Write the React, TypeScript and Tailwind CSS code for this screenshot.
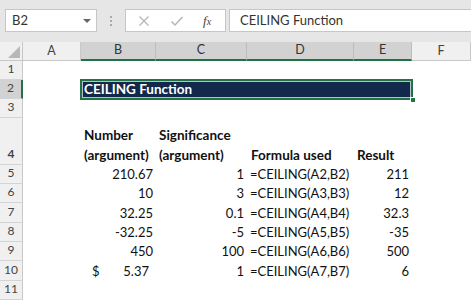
import React from 'react'

const cols = [58, 75, 91, 107, 58, 59]
const letters = ['A', 'B', 'C', 'D', 'E', 'F']

const num = 'flex items-end justify-end pr-[3px] pb-0'
const txt = 'flex items-end pl-[3px] pb-0'

const data: [string, string, string, string][] = [
    ['210.67', '1', '=CEILING(A2,B2)', '211'],
    ['10', '3', '=CEILING(A3,B3)', '12'],
    ['32.25', '0.1', '=CEILING(A4,B4)', '32.3'],
    ['-32.25', '-5', '=CEILING(A5,B5)', '-35'],
    ['450', '100', '=CEILING(A6,B6)', '500'],
    ['5.37', '1', '=CEILING(A7,B7)', '6'],
]
const heights = [19, 19, 20, 19, 19, 20]

const RowHead = ({ n, h, active }: { n: number; h: number; active?: boolean }) => (
    <div
        style={{ height: h }}
        className={`w-[23px] shrink-0 flex items-end justify-center pb-[1px] border-b border-[#d4d4d4] text-[12px] text-[#444] ${active ? 'bg-[#d2d2d2] border-r-2 border-r-[#217346]' : 'bg-[#f0f0f0] border-r border-r-[#c8c8c8]'}`}
    >
        {n}
    </div>
)

const App = () => {
    return (
        <div className="w-[471px] h-[300px] overflow-hidden bg-white font-['Lato','Liberation_Sans',sans-serif] text-[13px] text-[#111]">
            {/* formula bar */}
            <div className="h-[42px] bg-[#e6e6e6] flex items-start pt-[9px]">
                <div className="ml-[5px] w-[92px] h-[23px] bg-white border border-[#c6c6c6] flex items-center justify-between pl-[6px] pr-[5px]">
                    <span className="text-[13px] text-[#333]">B2</span>
                    <span className="w-0 h-0 border-l-[4px] border-r-[4px] border-t-[4px] border-l-transparent border-r-transparent border-t-[#666]" />
                </div>
                <div className="w-[28px] h-[23px] flex flex-col items-center justify-center gap-[2px]">
                    <span className="w-[2px] h-[2px] bg-[#aaa]" />
                    <span className="w-[2px] h-[2px] bg-[#aaa]" />
                    <span className="w-[2px] h-[2px] bg-[#aaa]" />
                </div>
                <div className="w-[101px] h-[23px] bg-white border border-[#c6c6c6] flex items-center">
                    <svg width="12" height="12" viewBox="0 0 12 12" className="ml-[12px]">
                        <path d="M1.5 1.5 L10.5 10.5 M10.5 1.5 L1.5 10.5" stroke="#b5b5b5" strokeWidth="1.3" fill="none" />
                    </svg>
                    <svg width="14" height="12" viewBox="0 0 14 12" className="ml-[20px]">
                        <path d="M1.5 6.5 L5 10 L12.5 2" stroke="#b5b5b5" strokeWidth="1.5" fill="none" />
                    </svg>
                    <span className="ml-[19px] font-['Liberation_Serif',serif] italic text-[13px] text-[#444]">f<span className="text-[10px]">x</span></span>
                </div>
                <div className="ml-[3px] flex-1 h-[23px] bg-white border border-[#c6c6c6] border-r-0 flex items-center pl-[10px] text-[13px] text-[#333]">
                    CEILING Function
                </div>
            </div>

            {/* column headers */}
            <div className="flex h-[19px]">
                <div className="w-[23px] shrink-0 bg-[#f0f0f0] border-r border-b border-[#c8c8c8] relative">
                    <svg width="12" height="12" className="absolute right-[2px] bottom-[2px]"><path d="M12 0 L12 12 L0 12 Z" fill="#b8b8b8" /></svg>
                </div>
                {letters.map((l, i) => {
                    const sel = i >= 1 && i <= 4
                    return (
                        <div
                            key={l}
                            style={{ width: cols[i] }}
                            className={`shrink-0 flex items-center justify-center text-[12.5px] border-r ${sel ? 'bg-[#d2d2d2] text-[#333] border-r-[#bdbdbd] border-b-2 border-b-[#217346]' : 'bg-[#f0f0f0] text-[#444] border-r-[#c8c8c8] border-b border-b-[#c8c8c8]'}`}
                        >
                            {l}
                        </div>
                    )
                })}
            </div>

            {/* row 1 */}
            <div className="flex">
                <RowHead n={1} h={19} />
            </div>

            {/* row 2 title */}
            <div className="flex">
                <RowHead n={2} h={19} active />
                <div className="w-[58px] shrink-0" />
                <div className="w-[331px] h-[19px] shrink-0 relative bg-[#13294b] flex items-center pl-[3px]">
                    <span className="font-bold text-white text-[13.5px]">CEILING Function</span>
                    <div className="absolute inset-x-[-1px] inset-y-[-1px] border-2 border-[#217346]">
                        <div className="w-full h-full border border-white/70" />
                    </div>
                    <div className="absolute right-[-4px] bottom-[-4px] w-[6px] h-[6px] bg-[#217346] border border-white" />
                </div>
            </div>

            {/* row 3 */}
            <div className="flex">
                <RowHead n={3} h={19} />
            </div>

            {/* row 4 headers */}
            <div className="flex h-[47px] font-bold text-[13.5px]">
                <RowHead n={4} h={47} />
                <div className="w-[58px] shrink-0" />
                <div className={`w-[75px] shrink-0 ${txt} leading-[20px]`}>
                    <div>Number<br />(argument)</div>
                </div>
                <div className={`w-[91px] shrink-0 ${txt} leading-[20px]`}>
                    <div>Significance<br />(argument)</div>
                </div>
                <div className={`w-[107px] shrink-0 ${txt} pl-[4px] leading-[20px]`}>Formula used</div>
                <div className={`w-[58px] shrink-0 ${txt} leading-[20px]`}>Result</div>
            </div>

            {data.map((r, i) => (
                <div key={i} className="flex" style={{ height: heights[i] }}>
                    <RowHead n={5 + i} h={heights[i]} />
                    <div className="w-[58px] shrink-0" />
                    {i === 5 ? (
                        <div className="w-[75px] shrink-0 flex items-end justify-between pl-[11px] pr-[7px]">
                            <span>$</span>
                            <span>{r[0]}</span>
                        </div>
                    ) : (
                        <div className={`w-[75px] shrink-0 ${num}`}>{r[0]}</div>
                    )}
                    <div className={`w-[91px] shrink-0 ${num}`}>{r[1]}</div>
                    <div className={`w-[107px] shrink-0 ${txt}`}>{r[2]}</div>
                    <div className={`w-[58px] shrink-0 ${num}`}>{r[3]}</div>
                </div>
            ))}

            <div className="flex">
                <RowHead n={11} h={19} />
            </div>
        </div>
    )
}

export default App
